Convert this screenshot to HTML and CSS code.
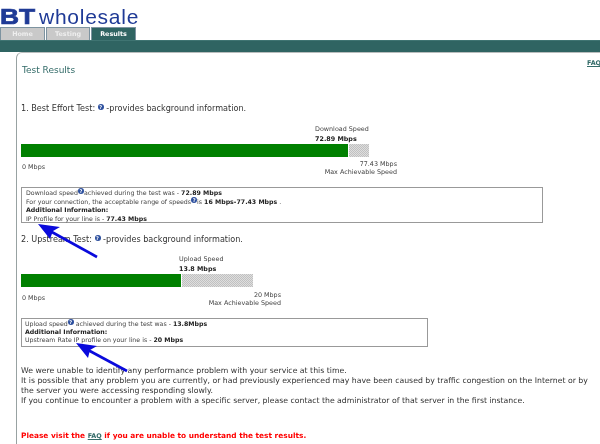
FILE: index.html
```html
<!DOCTYPE html>
<html lang="en">
<head>
<meta charset="utf-8">
<title>BT wholesale - Test Results</title>
<link rel="stylesheet" href="styles.css">
</head>
<body>
<div class="page">
  <header class="logo"><span class="logo-bt">BT</span><span class="logo-name">wholesale</span></header>
  <nav class="tabs">
    <a class="tab">Home</a>
    <a class="tab tab-narrow">Testing</a>
    <a class="tab tab-active">Results</a>
  </nav>
  <div class="band"></div>
  <main class="panel">
    <div class="title-row">
      <h1 class="title">Test Results</h1>
      <a class="faq-top">FAQ</a>
    </div>

    <p class="section s1">1. Best Effort Test: <span class="help big">?</span> -provides background information.</p>
    <div class="meter m1">
      <div class="meter-head"><div>Download Speed</div><div class="strong">72.89 Mbps</div></div>
      <div class="bar"><div class="fill"></div></div>
      <div class="meter-foot">
        <div class="zero">0 Mbps</div>
        <div class="max"><div>77.43 Mbps</div><div>Max Achievable Speed</div></div>
      </div>
    </div>
    <div class="info i1">
      <div>Download speed<span class="help">?</span>achieved during the test was - <b>72.89 Mbps</b></div>
      <div>For your connection, the acceptable range of speeds<span class="help">?</span>is <b>16 Mbps-77.43 Mbps</b> .</div>
      <div><b>Additional Information:</b></div>
      <div>IP Profile for your line is - <b>77.43 Mbps</b></div>
    </div>

    <p class="section s2">2. Upstream Test: <span class="help big">?</span> -provides background information.</p>
    <div class="meter m2">
      <div class="meter-head"><div>Upload Speed</div><div class="strong">13.8 Mbps</div></div>
      <div class="bar"><div class="fill"></div></div>
      <div class="meter-foot">
        <div class="zero">0 Mbps</div>
        <div class="max"><div>20 Mbps</div><div>Max Achievable Speed</div></div>
      </div>
    </div>
    <div class="info i2">
      <div>Upload speed<span class="help">?</span> achieved during the test was - <b>13.8Mbps</b></div>
      <div><b>Additional Information:</b></div>
      <div>Upstream Rate IP profile on your line is - <b>20 Mbps</b></div>
    </div>

    <div class="summary">
      <div>We were unable to identify any performance problem with your service at this time.</div>
      <div>It is possible that any problem you are currently, or had previously experienced may have been caused by traffic congestion on the Internet or by the server you were accessing responding slowly.</div>
      <div>If you continue to encounter a problem with a specific server, please contact the administrator of that server in the first instance.</div>
    </div>
    <p class="visit">Please visit the <a class="faq-inline">FAQ</a> if you are unable to understand the test results.</p>
  </main>
  <svg class="arrows" width="600" height="444" viewBox="0 0 600 444" aria-hidden="true">
    <path class="arrow-line" d="M50 231L97 257"/>
    <polygon class="arrow-head" points="38,224 60,227 53,231 50,239"/>
    <path class="arrow-line" d="M88 350L127 371"/>
    <polygon class="arrow-head" points="76,343 97,346 90,350 88,358"/>
  </svg>
</div>
</body>
</html>
```

FILE: styles.css
```css
html, body {
  margin: 0;
  padding: 0;
  background: #fff;
  overflow: hidden;
}
.page {
  position: relative;
  width: 600px;
  height: 444px;
  overflow: hidden;
  font-family: "DejaVu Sans", Verdana, sans-serif;
  color: #333;
  filter: blur(0.35px);
}
.logo {
  height: 27px;
  display: flex;
  align-items: flex-end;
  color: #1f3a96;
  line-height: 21px;
  font-family: "Liberation Sans", Arial, sans-serif;
}
.logo-bt {
  font-size: 22px;
  font-weight: 700;
  width: 39px;
  -webkit-text-stroke: 0.7px #1f3a96;
  transform: scaleX(1.2);
  transform-origin: left center;
}
.logo-name {
  font-size: 21px;
  letter-spacing: 0.75px;
}
.tabs {
  display: flex;
  gap: 1px;
  height: 13px;
}
.tab {
  box-sizing: border-box;
  width: 45px;
  height: 13px;
  background: #c9c9c9;
  border: 1px solid #7d93a0;
  border-bottom: 0;
  color: #eee;
  font-size: 6.4px;
  font-weight: 700;
  line-height: 12px;
  text-align: center;
}
.tab-narrow {
  width: 44px;
}
.tab-active {
  background: #2f6462;
  color: #fff;
}
.band {
  height: 12px;
  background: #2f6462;
  border-top: 1px solid #3f7472;
  box-sizing: border-box;
}
.panel {
  box-sizing: border-box;
  margin-left: 16px;
  height: 392px;
  padding-left: 4px;
  border-left: 1.5px solid #98a2a2;
  border-top: 1px solid #b9bdbd;
  border-top-left-radius: 6px;
  font-size: 7.75px;
}
.title-row {
  display: flex;
  justify-content: space-between;
  height: 38px;
  padding-top: 12px;
}
.title {
  margin: 0 0 0 1px;
  font-size: 9px;
  font-weight: 400;
  color: #336b68;
  line-height: 11px;
}
.faq-top, .faq-inline {
  color: #336b68;
  text-decoration: underline;
  font-weight: 700;
  font-size: 6.4px;
}
.faq-top {
  margin-top: -6px;
  width: 13px;
  white-space: nowrap;
}
.section {
  margin: 0;
  line-height: 10px;
  color: #333;
  font-size: 8.1px;
}
.s2 { margin-top: 11px; }
.help {
  display: inline-block;
  width: 6px;
  height: 6px;
  border-radius: 50%;
  background: #2c4f9e;
  color: #fff;
  font-size: 5px;
  font-weight: 700;
  line-height: 6px;
  text-align: center;
  vertical-align: 1px;
  overflow: hidden;
}
.meter {
  font-size: 6.4px;
  color: #444;
}
.m1 { width: 376px; margin-top: 11px; }
.m2 { width: 260px; margin-top: 10px; }
.m1 .meter-head { padding-left: 294px; }
.m2 .meter-head { padding-left: 158px; }
.meter-head {
  line-height: 10px;
}
.strong {
  font-weight: 700;
  color: #222;
}
.bar {
  height: 13px;
  background-color: #d0d0d0;
  background-image: conic-gradient(#c0c0c0 25%, #dedede 0 50%, #c0c0c0 0 75%, #dedede 0);
  background-size: 2px 2px;
}
.m1 .bar { width: 348px; }
.m2 .bar { width: 232px; }
.fill {
  height: 100%;
  background: #008000;
  border-right: 1px solid #fff;
  box-sizing: border-box;
}
.m1 .fill { width: 328px; }
.m2 .fill { width: 161px; }
.meter-foot {
  display: flex;
  justify-content: space-between;
  line-height: 8px;
  margin-top: 3px;
}
.m2 .meter-foot { margin-top: 4px; }
.zero {
  padding-top: 3px;
  padding-left: 1px;
}
.max {
  text-align: right;
}
.info {
  box-sizing: border-box;
  border: 1px solid #999;
  border-bottom-width: 1.5px;
  border-right-width: 1.5px;
  padding: 0 3px;
  font-size: 6.25px;
  line-height: 8.2px;
  color: #444;
}
.info b { color: #222; }
.i1 { width: 522px; height: 36px; margin-top: 11px; padding-left: 4px; }
.i2 { width: 407px; height: 29px; margin-top: 11px; }
.summary {
  margin-top: 19px;
  padding-right: 8px;
  line-height: 10px;
  color: #333;
}
.visit {
  margin: 25px 0 0;
  line-height: 10px;
  color: #f00;
  font-weight: 700;
  font-size: 7.4px;
}
.arrows {
  position: absolute;
  left: 0;
  top: 0;
  pointer-events: none;
}
.arrow-line {
  stroke: #0a0adc;
  stroke-width: 2.6;
  fill: none;
}
.arrow-head {
  fill: #0a0adc;
}
```
